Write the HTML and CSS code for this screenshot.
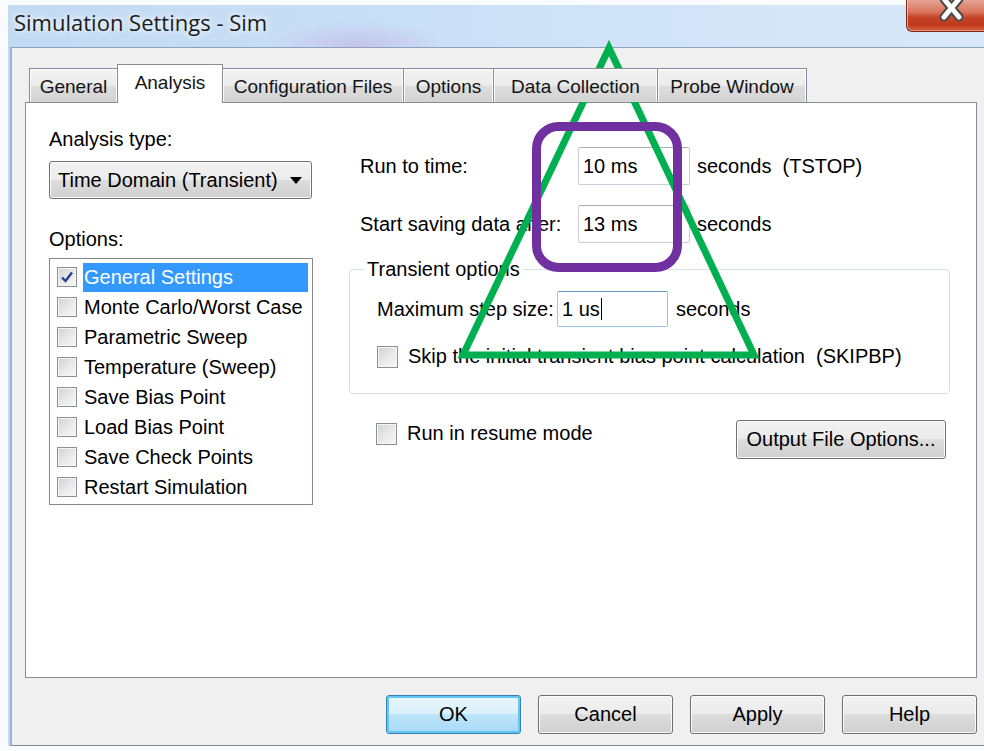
FILE: index.html
```html
<!DOCTYPE html>
<html lang="en">
<head>
<meta charset="utf-8">
<title>Simulation Settings - Sim</title>
<link rel="stylesheet" href="styles.css">
</head>
<body>
<div class="window">
  <div class="frame">
    <div class="titlebar">
      <span class="title">Simulation Settings - Sim</span>
      <div class="close">
        <svg width="78" height="32" viewBox="0 0 78 32">
          <path d="M37 -1 L52 17 M52 -1 L37 17" stroke="#4b4b4b" stroke-width="9" stroke-linecap="round"/>
          <path d="M37 -1 L52 17 M52 -1 L37 17" stroke="#ffffff" stroke-width="5" stroke-linecap="round"/>
        </svg>
      </div>
    </div>

    <div class="client">
      <div class="tabs">
        <div class="tab tab-general">General</div>
        <div class="tab tab-analysis active">Analysis</div>
        <div class="tab tab-config">Configuration Files</div>
        <div class="tab tab-options">Options</div>
        <div class="tab tab-data">Data Collection</div>
        <div class="tab tab-probe">Probe Window</div>
      </div>

      <div class="panel">
        <div class="col-left">
          <div class="label">Analysis type:</div>
          <div class="combo"><span>Time Domain (Transient)</span><span class="arrow"></span></div>
          <div class="label options-label">Options:</div>
          <div class="list">
            <div class="item selected">
              <span class="cb checked"><svg width="14" height="14" viewBox="0 0 14 14"><path d="M2 7.5 L5.5 11 L12 2.5" fill="none" stroke="#24418f" stroke-width="2.4"/></svg></span>
              <span class="item-text">General Settings</span>
            </div>
            <div class="item"><span class="cb"></span><span class="item-text">Monte Carlo/Worst Case</span></div>
            <div class="item"><span class="cb"></span><span class="item-text">Parametric Sweep</span></div>
            <div class="item"><span class="cb"></span><span class="item-text">Temperature (Sweep)</span></div>
            <div class="item"><span class="cb"></span><span class="item-text">Save Bias Point</span></div>
            <div class="item"><span class="cb"></span><span class="item-text">Load Bias Point</span></div>
            <div class="item"><span class="cb"></span><span class="item-text">Save Check Points</span></div>
            <div class="item"><span class="cb"></span><span class="item-text">Restart Simulation</span></div>
          </div>
        </div>

        <div class="col-right">
          <div class="field-row">
            <span class="field-label">Run to time:</span>
            <span class="input">10 ms</span>
            <span class="unit">seconds&nbsp; (TSTOP)</span>
          </div>
          <div class="field-row row-save">
            <span class="field-label">Start saving data after:</span>
            <span class="input">13 ms</span>
            <span class="unit">seconds</span>
          </div>

          <fieldset class="group">
            <legend>Transient options</legend>
            <div class="step-row">
              <span class="step-label">Maximum step size:</span>
              <span class="input input-step focused">1 us<span class="caret"></span></span>
              <span class="unit unit-step">seconds</span>
            </div>
            <div class="check-row skip-row">
              <span class="cb cb-lg"></span>
              <span>Skip the initial transient bias point calculation&nbsp; (SKIPBP)</span>
            </div>
          </fieldset>

          <div class="resume-row">
            <div class="check-row resume-check">
              <span class="cb cb-lg"></span>
              <span>Run in resume mode</span>
            </div>
            <button class="btn btn-output">Output File Options...</button>
          </div>
        </div>
      </div>

      <div class="buttons">
        <button class="btn btn-dialog btn-default">OK</button>
        <button class="btn btn-dialog">Cancel</button>
        <button class="btn btn-dialog">Apply</button>
        <button class="btn btn-dialog">Help</button>
      </div>
    </div>
  </div>

  <svg class="markup" width="984" height="751" viewBox="0 0 984 751">
    <polygon points="609,48 463,355 754,355" fill="none" stroke="#00b050" stroke-width="7"/>
    <rect x="536.5" y="126.5" width="141" height="141" rx="22" ry="22" fill="none" stroke="#7030a0" stroke-width="9"/>
  </svg>
</div>
</body>
</html>
```

FILE: styles.css
```css
* {
  box-sizing: border-box;
}

html,
body {
  margin: 0;
  padding: 0;
}

body {
  background: #ffffff;
  font-family: "Liberation Sans", Arial, sans-serif;
  font-size: 20px;
  line-height: 23px;
  color: #000000;
}

.window {
  position: relative;
  width: 984px;
  height: 751px;
  overflow: hidden;
  background: #fafbfc;
}

/* Aero frame with the glassy caption */
.frame {
  margin: 5px 0 0 8px;
  background:
    radial-gradient(ellipse 90px 24px at 350px 40px, rgba(196, 186, 228, 0.7), rgba(196, 186, 228, 0) 100%),
    linear-gradient(to right, #c2daf3 0%, #c9dff6 40%, #d4e5f8 75%, #d8e8f9 100%);
}

.titlebar {
  height: 42px;
  display: flex;
  align-items: flex-start;
  padding-left: 6px;
}

.title {
  margin-top: 3px;
  font-family: "Open Sans", "Liberation Sans", sans-serif;
  font-size: 22px;
  line-height: 28px;
  color: #1c1c1c;
  text-shadow: 0 0 6px rgba(255, 255, 255, 0.95), 0 0 10px rgba(255, 255, 255, 0.8);
}

.close {
  margin-left: auto;
  margin-top: -5px;
  width: 78px;
  height: 32px;
  border: 1px solid #7b2a1a;
  border-top: none;
  border-right: none;
  border-radius: 0 0 0 6px;
  background: linear-gradient(#e6a493 0%, #d8735b 40%, #c7452a 55%, #c0391d 80%, #d5603f 100%);
  box-shadow: inset 1px 0 0 rgba(255, 220, 210, 0.6), inset 0 -1px 0 rgba(255, 200, 180, 0.5);
}

.close svg {
  display: block;
}

/* Dialog client area */
.client {
  margin-left: 2px;
  background: #f0f0f0;
  border-top: 1px solid #8ea2bb;
  border-left: 2px solid #9bb1cd;
  border-bottom: 1px solid #7e8c9e;
  padding: 16px 7px 11px 13px;
}

/* Tab strip */
.tabs {
  position: relative;
  z-index: 1;
  display: flex;
  align-items: flex-end;
  height: 39px;
  padding-left: 4px;
}

.tab {
  height: 34px;
  margin-bottom: 1px;
  border: 1px solid #898c95;
  border-bottom: none;
  background: linear-gradient(#f2f2f2 0%, #ebebeb 50%, #dddddd 51%, #d3d3d3 100%);
  box-shadow: inset 1px 1px 0 #fbfbfb, inset -1px 0 0 #fbfbfb;
  display: flex;
  align-items: center;
  justify-content: center;
  padding-top: 2px;
  font-size: 19px;
  color: #141414;
  white-space: nowrap;
}

.tab + .tab {
  margin-left: -1px;
}

.tab.active {
  height: 39px;
  margin-bottom: 0;
  background: #ffffff;
  box-shadow: none;
  padding-top: 0;
  padding-bottom: 3px;
}

.tab-general { width: 89px; }
.tab-analysis { width: 106px; }
.tab-config { width: 182px; }
.tab-options { width: 91px; }
.tab-data { width: 165px; }
.tab-probe { width: 150px; }

/* Tab page */
.panel {
  margin-top: -1px;
  height: 576px;
  background: #ffffff;
  border: 1px solid #898c95;
  display: grid;
  grid-template-columns: 323px 1fr;
}

.col-left {
  padding: 25px 0 0 23px;
}

.label {
  height: 23px;
}

.combo {
  margin-top: 10px;
  width: 263px;
  height: 38px;
  border: 1px solid #707070;
  border-radius: 3px;
  background: linear-gradient(#f2f2f2 0%, #ebebeb 50%, #dddddd 51%, #cfcfcf 100%);
  box-shadow: inset 0 0 0 1px #fbfbfb;
  display: flex;
  align-items: center;
  justify-content: space-between;
  padding: 0 9px 0 8px;
}

.arrow {
  width: 0;
  height: 0;
  border-left: 6px solid transparent;
  border-right: 6px solid transparent;
  border-top: 7px solid #000000;
}

.options-label {
  margin-top: 29px;
}

.list {
  margin-top: 7px;
  width: 264px;
  height: 247px;
  border: 1px solid #828790;
  padding: 3px 4px 0 7px;
}

.item {
  display: flex;
  align-items: center;
  height: 30px;
}

.item .cb {
  margin-right: 6px;
}

.item-text {
  flex: 1;
  height: 29px;
  line-height: 29px;
  padding-left: 1px;
  white-space: nowrap;
}

.item.selected .item-text {
  background: #3399ff;
  color: #ffffff;
}

/* Check boxes */
.cb {
  flex: none;
  width: 20px;
  height: 20px;
  border: 1px solid #8e8f8f;
  background: linear-gradient(135deg, #cdd1d6 0%, #e9eaec 55%, #f8f8f8 100%);
  box-shadow: inset 0 0 0 1px #f6f6f6;
  display: flex;
  align-items: center;
  justify-content: center;
}

.cb-lg {
  width: 21px;
  height: 22px;
}

/* Right-hand fields */
.col-right {
  padding: 44px 26px 0 0;
}

.field-row {
  display: flex;
  align-items: center;
  height: 38px;
  padding-left: 11px;
}

.row-save {
  margin-top: 20px;
}

.field-label {
  width: 218px;
  white-space: nowrap;
}

.input {
  width: 112px;
  height: 38px;
  border: 1px solid #c9cdd3;
  border-top-color: #acafb5;
  border-radius: 2px;
  background: #ffffff;
  display: flex;
  align-items: center;
  padding-left: 4px;
  white-space: nowrap;
}

.unit {
  margin-left: 7px;
  white-space: nowrap;
}

.group {
  margin: 15px 0 0 0;
  padding: 10px 0 25px 27px;
  border: 1px solid #d5dfe5;
  border-radius: 4px;
  box-shadow: inset 1px 1px 0 #ffffff;
}

.group legend {
  margin-left: -13px;
  padding: 0 3px;
  line-height: 23px;
}

.step-row {
  display: flex;
  align-items: center;
  height: 36px;
}

.step-label {
  width: 180px;
  white-space: nowrap;
}

.input-step {
  width: 111px;
  height: 36px;
}

.input.focused {
  border-color: #9ec3e6;
  border-top-color: #5f96c8;
}

.caret {
  display: inline-block;
  width: 1px;
  height: 22px;
  margin-left: 1px;
  background: #000000;
}

.unit-step {
  margin-left: 8px;
}

.check-row {
  display: flex;
  align-items: center;
  gap: 10px;
  height: 23px;
  white-space: nowrap;
}

.skip-row {
  margin-top: 18px;
}

.resume-row {
  margin-top: 26px;
  display: flex;
  align-items: flex-start;
  padding-left: 27px;
}

.resume-check {
  margin-top: 2px;
}

/* Push buttons */
.btn {
  font-family: inherit;
  font-size: 20px;
  color: #000000;
  height: 39px;
  padding: 0;
  border: 1px solid #707070;
  border-radius: 3px;
  background: linear-gradient(#f2f2f2 0%, #ebebeb 49%, #dddddd 50%, #cfcfcf 100%);
  box-shadow: inset 0 0 0 1px #fbfbfb;
}

.btn-output {
  margin-left: auto;
  margin-right: 4px;
  width: 210px;
}

.buttons {
  margin-top: 17px;
  display: flex;
  justify-content: flex-end;
  gap: 17px;
}

.btn-dialog {
  width: 135px;
}

.btn-default {
  border-color: #3c7fb1;
  background: linear-gradient(#eaf6fd 0%, #d9f0fc 49%, #bee6fd 50%, #a7d9f5 100%);
  box-shadow: inset 0 0 0 2px #62c7f5;
}

/* Annotation layer drawn over the dialog */
.markup {
  position: absolute;
  left: 0;
  top: 0;
  pointer-events: none;
}
```
